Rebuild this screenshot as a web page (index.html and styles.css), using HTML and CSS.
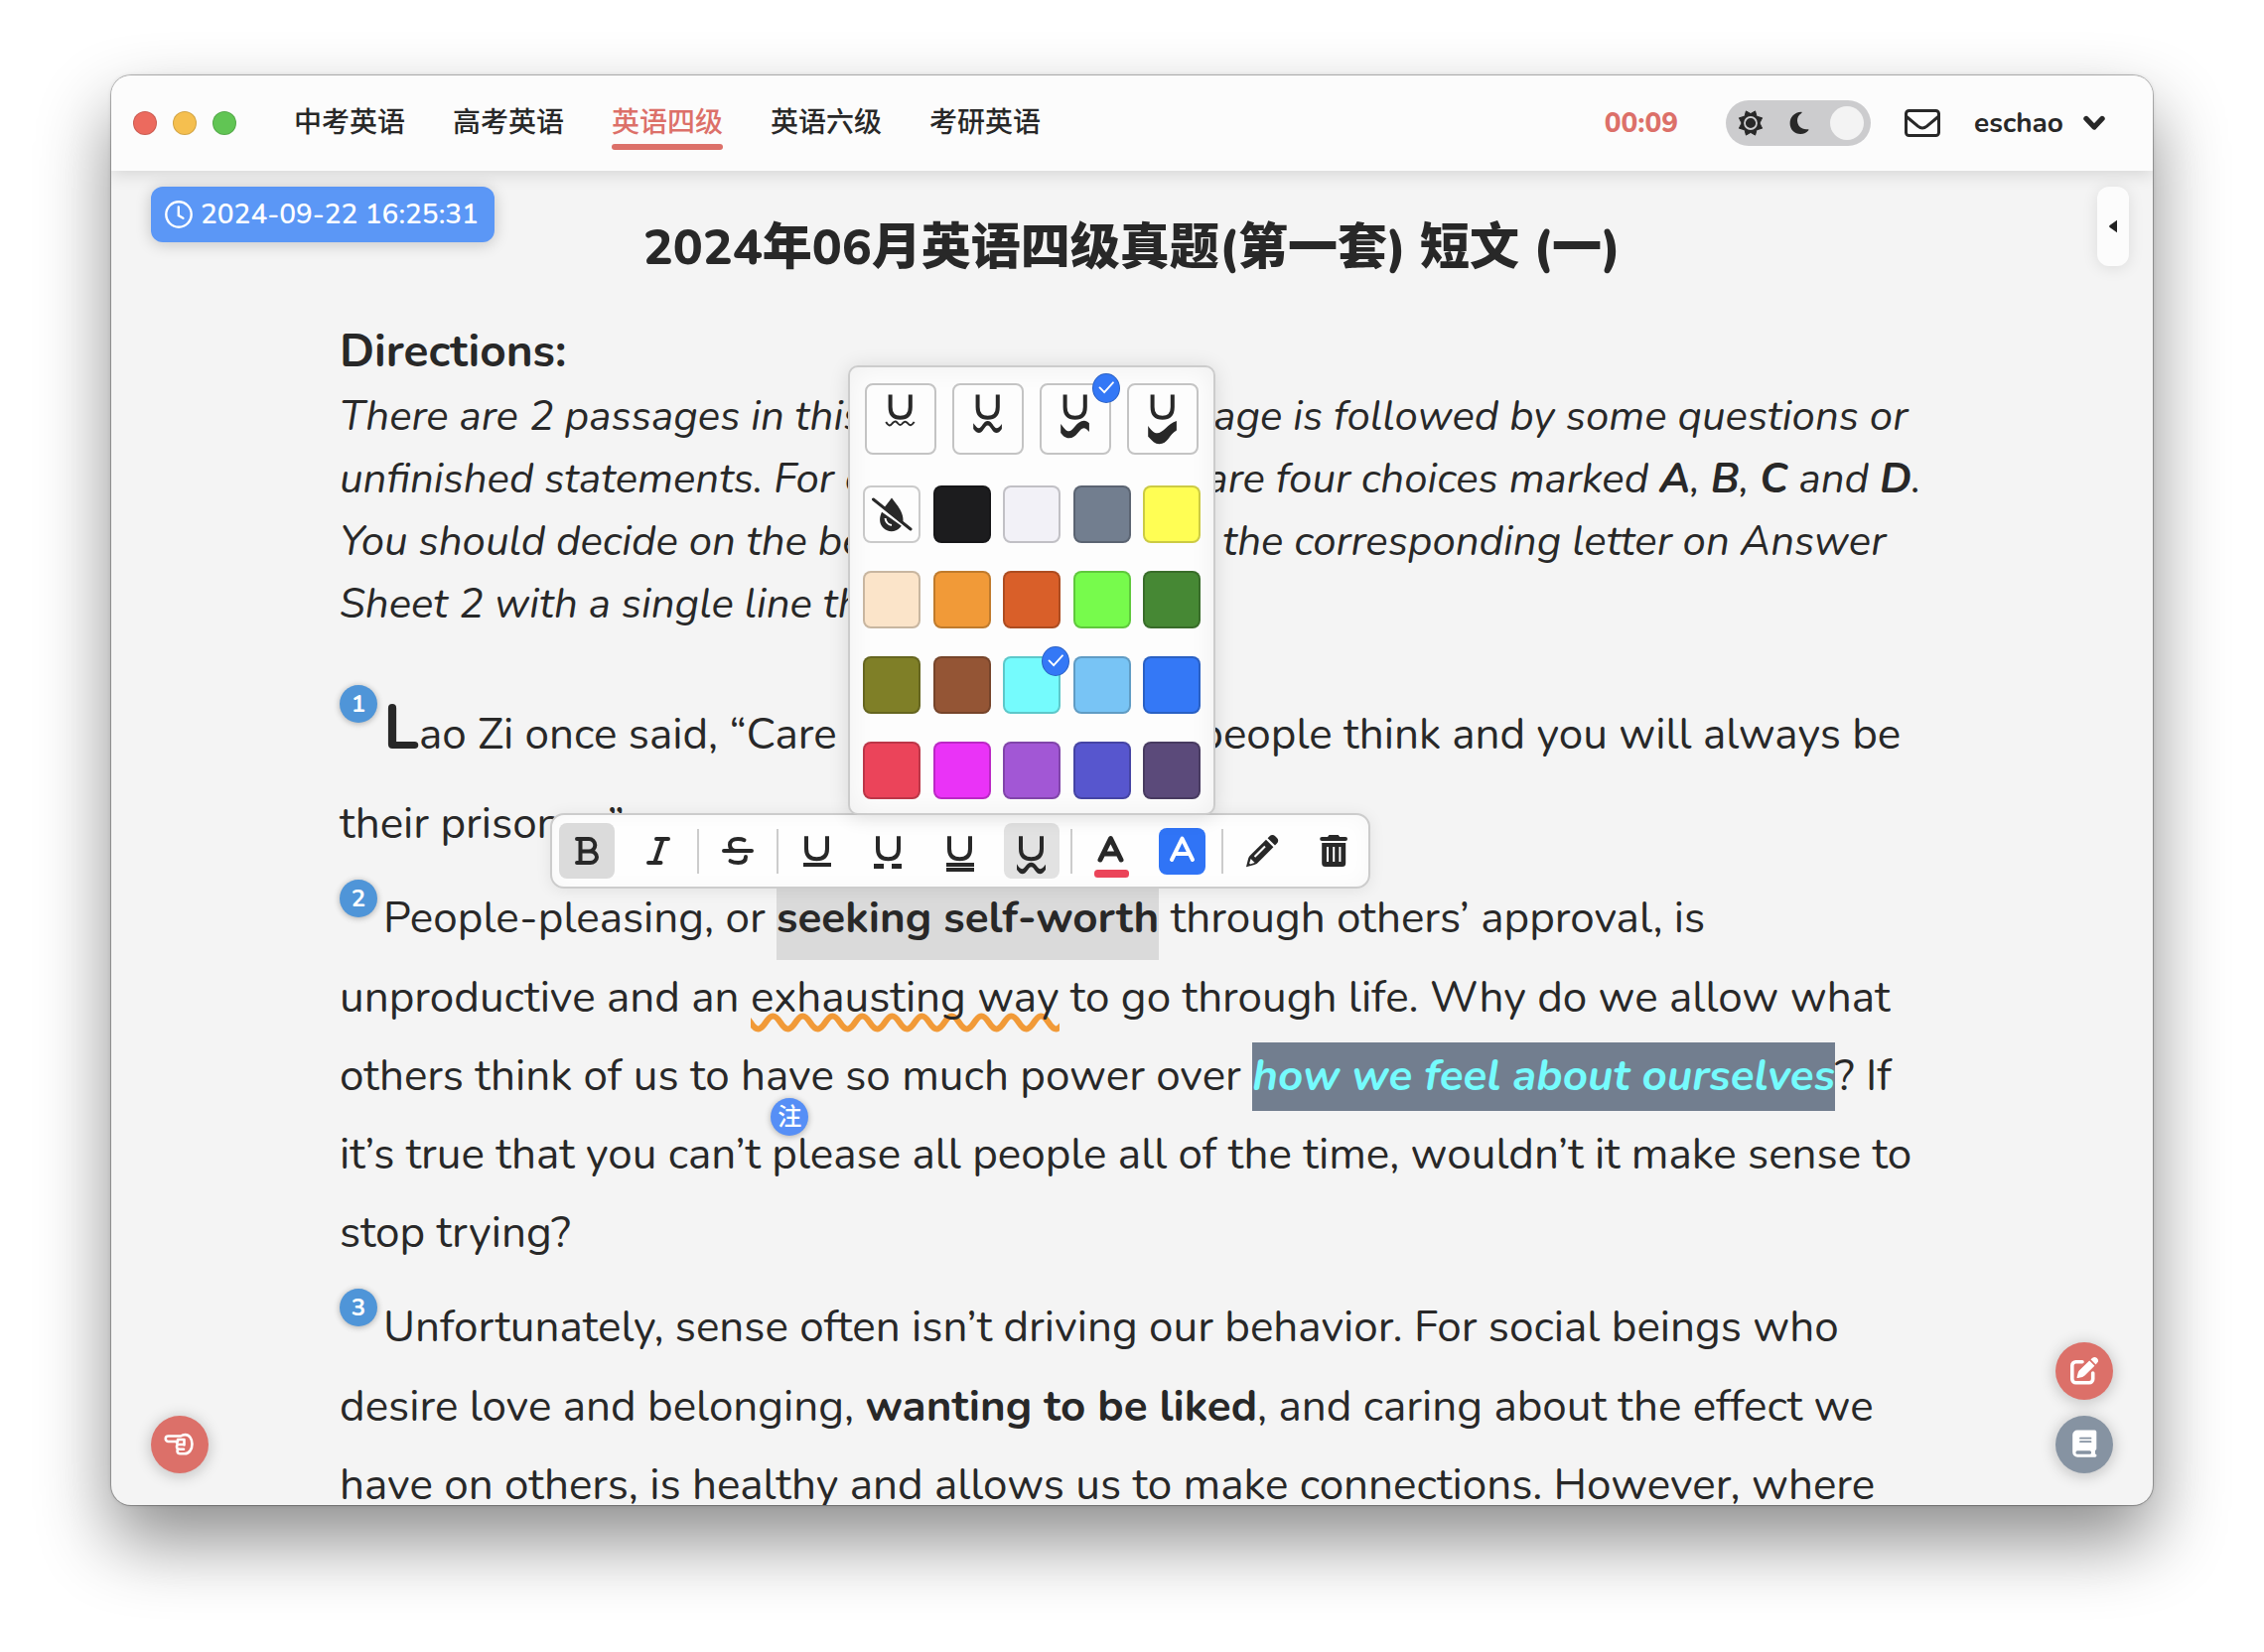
FILE: index.html
```html
<!DOCTYPE html>
<html lang="zh-CN">
<head>
<meta charset="utf-8">
<meta name="viewport" content="width=device-width, initial-scale=1">
<title>2024年06月英语四级真题(第一套) 短文 (一)</title>
<link rel="stylesheet" href="styles.css">
</head>
<body>
<div class="window">
  <header class="header">
    <div class="lights">
      <button class="light light-close" type="button" aria-label="Close"></button>
      <button class="light light-min" type="button" aria-label="Minimize"></button>
      <button class="light light-max" type="button" aria-label="Maximize"></button>
    </div>
    <nav class="nav">
      <a class="nav-link" href="#zk">中考英语</a>
      <a class="nav-link" href="#gk">高考英语</a>
      <a class="nav-link active" href="#cet4">英语四级</a>
      <a class="nav-link" href="#cet6">英语六级</a>
      <a class="nav-link" href="#ky">考研英语</a>
    </nav>
    <span class="timer">00:09</span>
    <label class="theme">
      <input class="theme-input" type="checkbox" role="switch" aria-label="Theme">
      <svg class="theme-sun" viewBox="0 0 26 26"><path d="M13 3.6 17.6 0.9 19 6.2 24.6 7.8 22 13 24.6 18.2 19 19.8 17.6 25.1 13 22.4 8.4 25.1 7 19.8 1.4 18.2 4 13 1.4 7.8 7 6.2 8.400 .9z" fill="#282828" stroke="#282828" stroke-width="1" stroke-linejoin="round"/><circle cx="13" cy="13" r="6" fill="#282828" stroke="#ccccce" stroke-width="1.8"/></svg>
      <svg class="theme-moon" viewBox="0 0 20 24"><path d="M12 .8C5 1.200.6 6 .6 12.200c0 6.300 4.800 10.800 10.600 10.800 3.600 0 6.400-1.500 8.100-3.800.4-.6 0-1.100-.6-1-6 .9-10.700-3.200-10.700-8.900 0-3 1.300-5.400 4.300-7.400.6-.4.4-1.100-.3-1.100z" fill="#282828"/></svg>
      <span class="theme-knob"></span>
    </label>
    <button class="mail" type="button" aria-label="Messages">
      <svg width="36" height="28" viewBox="0 0 36 28" fill="none" stroke="#282828" stroke-width="3" stroke-linejoin="round"><rect x="1.500" y="1.500" width="33" height="25" rx="3"/><path d="M2 7.500 13.500 17.200c3 2.400 6 2.400 9 0L34 7.500"/></svg>
    </button>
    <button class="user" type="button">eschao
      <svg width="22" height="16" viewBox="0 0 22 16"><path d="M3 3.500 11 12l8-8.500" fill="none" stroke="#282828" stroke-width="5.400" stroke-linecap="round" stroke-linejoin="round"/></svg>
    </button>
  </header>

  <main class="reader">
    <div class="clock">
      <svg width="28" height="28" viewBox="0 0 28 28" fill="none" stroke="#fff" stroke-width="2.400" stroke-linecap="round"><circle cx="14" cy="14" r="12.700"/><path d="M13.800 6.500V15l4.600 2.800"/></svg>
      <time datetime="2024-09-22T16:25:31">2024-09-22 16:25:31</time>
    </div>
    <button class="drawer" type="button" aria-label="Open panel">
      <svg width="8" height="14" viewBox="0 0 8 14"><path d="M8 .8v12.400L.6 7.900a1.300 1.300 0 0 1 0-1.800z" fill="#222"/></svg>
    </button>

    <article class="article">
      <h1 class="title">2024年06月英语四级真题(第一套) 短文 (一)</h1>
      <h2 class="subtitle" lang="en">Directions:</h2>
      <p class="directions" lang="en">There are 2 passages in this section. Each passage is followed by some questions or unfinished statements. For each of them there are four choices marked <b>A</b>, <b>B</b>, <b>C</b> and <b>D</b>. You should decide on the best choice and mark the corresponding letter on Answer Sheet 2 with a single line through the centre.</p>

      <div class="passage" lang="en">
        <p class="para"><span class="num num-first">1</span><b class="dropcap">L</b>ao Zi once said, “Care about what other people think and you will always be their prisoner.”</p>
        <p class="para"><span class="num">2</span>People-pleasing, or <b class="selected">seeking self-worth</b> through others’ approval, is unproductive and an <span class="wavy">exhausting way</span> to go through life. Why do we allow what others think of us to have so much power over <span class="marked">how we feel about ourselves</span>? If it’s true that you can’t <span class="noted">please<button class="note" type="button" lang="zh-CN">注</button></span> all people all of the time, wouldn’t it make sense to stop trying?</p>
        <p class="para"><span class="num">3</span>Unfortunately, sense often isn’t driving our behavior. For social beings who desire love and belonging, <b>wanting to be liked</b>, and caring about the effect we have on others, is healthy and allows us to make connections. However, where</p>
      </div>

      <div class="toolbar" role="toolbar" aria-label="Format">
        <div class="group">
          <button class="tool on" type="button" aria-label="Bold"><svg viewBox="0 0 56 56"><path class="s4" d="M18 16H30a6.300 6.300 0 0 1 0 12.600H21.500M30 28.600H31.500a6.500 5.700 0 0 1 0 11.400H18M21.500 16V40"/></svg></button>
          <button class="tool" type="button" aria-label="Italic"><svg viewBox="0 0 56 56"><path class="s4" d="M26 16H38M18 40H30.500M32.500 16 24.300 40"/></svg></button>
        </div>
        <span class="sep"></span>
        <button class="tool" type="button" aria-label="Strikethrough"><svg viewBox="0 0 56 56"><path class="s4" d="M14 28H42M34.500 17.200C32.500 16.200 30 16 28 16c-5 0-8 2.500-8 6 0 3 2 5 5 6M20.500 38.200C23 39.600 25.500 40 28.500 40c4.500 0 7.500-2 7.500-6"/></svg></button>
        <span class="sep"></span>
        <div class="group">
          <button class="tool" type="button" aria-label="Underline"><svg viewBox="0 0 56 56"><path class="u" d="M17 13.300V26C17 33 21 36.300 27.500 36.300S38 33 38 26V13.300"/><path d="M14 40h28v4H14z"/></svg></button>
          <button class="tool" type="button" aria-label="Dashed underline"><svg viewBox="0 0 56 56"><path class="u" d="M17 13.300V26C17 33 21 36.300 27.500 36.300S38 33 38 26V13.300"/><path d="M13 41h10v5H13zM31 41h10v5H31z"/></svg></button>
          <button class="tool" type="button" aria-label="Double underline"><svg viewBox="0 0 56 56"><path class="u" d="M17 13.300V26C17 33 21 36.300 27.500 36.300S38 33 38 26V13.300"/><path d="M14 40h28v4H14zM14 45h28v4H14z"/></svg></button>
          <div class="anchor">
            <button class="tool on-light" type="button" aria-label="Wavy underline" aria-expanded="true"><svg viewBox="0 0 56 56"><path class="u" d="M17 13.300V26C17 33 21 36.300 27.500 36.300S38 33 38 26V13.300"/><path d="M13 41.300c2 3.300 3.600 4.900 5.200 4.900 3 0 4.500-6.400 9.300-6.400s6.300 6.400 9.300 6.400c1.600 0 3.200-1.600 5.200-4.400V47c-2 2.800-3.700 4.200-5.500 4.200-4.800 0-6-7-9-7s-4.200 7-9 7c-1.800 0-3.500-1.400-5.500-4.200z"/></svg></button>
            <div class="popup">
              <div class="styles">
                <button class="style" type="button" aria-label="Thin wave"><svg viewBox="0 0 72 72"><path class="u" d="M25.600 11.500V24C25.600 31.500 29 34.800 35.700 34.800S45.800 31.500 45.800 24V11.500"/><path class="s2" d="M21.200 39c3 4.500 4 4.500 7 .8 2.200-2 3.200-1.400 4.600.2 2 2.600 3.500 2.600 5.500 0 1.600-1.800 2.900-1.800 4.500 0 2.500 3.200 4 3 6.900-1"/></svg></button>
                <button class="style" type="button" aria-label="Medium wave"><svg viewBox="0 0 72 72"><path class="u" d="M25.600 11.500V24C25.600 31.500 29 34.800 35.700 34.800S45.800 31.500 45.800 24V11.500"/><path d="M21.200 40.200c2.500 3 4 5 5.500 5 3 0 4.500-7.200 9-7.200s6 7.200 9 7.200c1.500 0 3-1.200 5.200-4.200V46c-2.200 3-3.700 4-5.200 4-4.500 0-6-7.600-9-7.600s-4.500 7.600-9 7.600c-1.500 0-3-1-5.500-4z"/></svg></button>
                <button class="style" type="button" aria-label="Thick wave"><svg viewBox="0 0 72 72"><path class="u" d="M25.600 11.500V24C25.600 31.500 29 34.800 35.700 34.800S45.800 31.500 45.800 24V11.500"/><path d="M21.200 41c3.500 4.500 5.500 7.300 8 7.300 5 0 8-10.600 15.500-10.600 2 0 3.700 1 5.200 2.600V49c-2-2.300-3.500-3.800-5.500-3.800C40 45.200 37.500 55.300 29.500 55.300c-4 0-6-2.500-8.300-5.300z"/></svg><span class="check"><svg viewBox="0 0 28 28"><path d="m7 14.500 5 5 9.500-10.500"/></svg></span></button>
                <button class="style" type="button" aria-label="Heavy wave"><svg viewBox="0 0 72 72"><path class="u" d="M25.600 11.500V24C25.600 31.500 29 34.800 35.700 34.800S45.800 31.500 45.800 24V11.500"/><path d="M21.200 43c4 5.500 6.500 7.300 9 7.300 6 0 11-9.500 19.700-12.300V47.500C42.500 51.500 41 61.300 32.500 61.300c-4.500 0-7-3-11.300-7.500z"/></svg></button>
              </div>
              <div class="swatches">
                <button class="swatch none" type="button" aria-label="No colour"><svg viewBox="0 0 58 58"><path d="M29 12.500c5 6.500 11.500 14 11.500 22a11.700 11.700 0 0 1-23.400 0c0-8 7-15.500 11.900-22z"/><path d="M22.500 33c.5 4 3 6.500 6.500 7" fill="none" stroke="#fdfdfd" stroke-width="2"/><path d="m8 16.500 42 29.500" fill="none" stroke="#fdfdfd" stroke-width="4"/><path d="m10.500 14 37.500 30" fill="none" stroke="#282828" stroke-width="3" stroke-linecap="round"/></svg></button>
                <button class="swatch c-black" type="button" aria-label="Black"></button>
                <button class="swatch c-white" type="button" aria-label="White"></button>
                <button class="swatch c-gray" type="button" aria-label="Gray"></button>
                <button class="swatch c-yellow" type="button" aria-label="Yellow"></button>
                <button class="swatch c-cream" type="button" aria-label="Cream"></button>
                <button class="swatch c-orange" type="button" aria-label="Orange"></button>
                <button class="swatch c-rust" type="button" aria-label="Rust"></button>
                <button class="swatch c-lime" type="button" aria-label="Lime"></button>
                <button class="swatch c-green" type="button" aria-label="Green"></button>
                <button class="swatch c-olive" type="button" aria-label="Olive"></button>
                <button class="swatch c-brown" type="button" aria-label="Brown"></button>
                <button class="swatch c-cyan" type="button" aria-label="Cyan"><span class="check"><svg viewBox="0 0 28 28"><path d="m7 14.500 5 5 9.500-10.500"/></svg></span></button>
                <button class="swatch c-sky" type="button" aria-label="Sky"></button>
                <button class="swatch c-blue" type="button" aria-label="Blue"></button>
                <button class="swatch c-red" type="button" aria-label="Red"></button>
                <button class="swatch c-magenta" type="button" aria-label="Magenta"></button>
                <button class="swatch c-purple" type="button" aria-label="Purple"></button>
                <button class="swatch c-indigo" type="button" aria-label="Indigo"></button>
                <button class="swatch c-plum" type="button" aria-label="Plum"></button>
              </div>
            </div>
          </div>
        </div>
        <span class="sep"></span>
        <div class="group">
          <button class="tool" type="button" aria-label="Text colour"><svg viewBox="0 0 56 56"><path class="a" d="M17 37 27.500 15.600 38 37M20.500 31H34.500"/><rect x="11" y="47" width="35" height="8" rx="3.500" fill="#eb4459"/></svg></button>
          <button class="tool" type="button" aria-label="Highlight colour"><svg viewBox="0 0 56 56"><rect x="4" y="5" width="47" height="47" rx="8" fill="#3074f6"/><path class="a white" d="M17 37 27.500 15.600 38 37M20.500 31H34.500"/></svg></button>
        </div>
        <span class="sep"></span>
        <div class="group">
          <button class="tool" type="button" aria-label="Edit"><svg viewBox="0 0 56 56"><path d="m33.600 15.200 2-2c1.600-1.600 4-1.600 5.600 0l1.800 1.800c1.600 1.600 1.600 4 0 5.600l-2 2zM32 16.800l7.400 7.400-15.700 15.900c-1 1-2 1.500-3.400 1.900L12 44.200l2.100-8.400c.4-1.400 1-2.500 2-3.400z"/><path d="M20.500 34 31 23.500" fill="none" stroke="#fdfdfd" stroke-width="2"/><path d="m16.600 36 4 4-4.600 1.400-.8-.8z" fill="#fdfdfd"/></svg></button>
          <button class="tool" type="button" aria-label="Delete"><svg viewBox="0 0 56 56"><path d="M23.500 12h9.200l1.500 2H40a2 2 0 0 1 0 4H16.200a2 2 0 0 1 0-4H22z"/><path d="M16.200 20h24v20.500a3.500 3.500 0 0 1-3.500 3.500h-17a3.500 3.500 0 0 1-3.500-3.500z"/><path d="M22 24v15M28.200 24v15M34.400 24v15" stroke="#fdfdfd" stroke-width="2"/></svg></button>
        </div>
      </div>
    </article>
  </main>

  <button class="round round-left" type="button" aria-label="Previous">
    <svg viewBox="0 0 58 58" fill="none" stroke="#fff" stroke-width="2.600" stroke-linejoin="round" stroke-linecap="round"><path d="M30 20.500H17.500a2.500 2.500 0 0 0 0 5.500H27M30 20.500c1.500-1 3-1.400 4.500-1.400 4 0 7 4 7 9.400s-3 9.700-7.500 9.700h-4.500c-3.600 0-3.600-3.800-1.500-4.400-2.600-.8-2.800-4.600 0-4.800-2.500-.6-2.500-2.900-1-3.300M28 29h4.500M28.500 33.800H33M27 26v-2h6.500v5.500"/></svg>
  </button>
  <div class="dock">
    <button class="round round-edit" type="button" aria-label="Write">
      <svg viewBox="0 0 58 58"><path d="M27 19.800H20.500a3.700 3.700 0 0 0-3.700 3.700V37a3.700 3.700 0 0 0 3.700 3.700H34a3.700 3.700 0 0 0 3.700-3.700V31" fill="none" stroke="#fff" stroke-width="3.600" stroke-linecap="round"/><path d="m35.500 17.300 1.800-1.600c1.200-1 3-1 4.200 0l.7.700c1.200 1.200 1.200 3 0 4.200l-1.600 1.800zM34.200 18.600l5.200 5.200L29.500 33.600c-.7.700-1.400 1.100-2.300 1.300l-4.700 1.200c-.6.100-1-.3-.9-.9l1.200-4.700c.3-.9.700-1.600 1.300-2.300z" fill="#fff"/></svg>
    </button>
    <button class="round round-book" type="button" aria-label="Dictionary">
      <svg viewBox="0 0 58 58"><path d="M22 14.500H39.500a1.800 1.800 0 0 1 1.800 1.800V33.200a1.800 1.800 0 0 1-1.300 1.700V38.600a1.600 1.600 0 0 1-.3 3.200H22.200a5 5 0 0 1-5-5V19.300a4.800 4.800 0 0 1 4.800-4.800z" fill="#fff"/><path d="M25 22.700H35.500M25 26.200H35.500" stroke="#8693a2" stroke-width="1.800" stroke-linecap="round"/><rect x="20.500" y="35.200" width="15.500" height="3.600" rx="1.500" fill="#8693a2"/></svg>
    </button>
  </div>
</div>
</body>
</html>
```
FILE: styles.css
```css
* {
  box-sizing: border-box;
}

body {
  margin: 0;
  background: #fff;
  color: #282828;
  font-family: Nunito, "Noto Sans CJK SC", sans-serif;
}

button {
  padding: 0;
  border: 0;
  background: none;
  color: inherit;
  font: inherit;
  cursor: pointer;
}

svg {
  display: block;
}

/* window frame */
.window {
  position: relative;
  display: flex;
  flex-direction: column;
  height: calc(100vh - 224px);
  margin: 76px 112px 148px;
  overflow: hidden;
  border-radius: 20px;
  background: #f4f4f4;
  box-shadow: 0 0 0 1px rgba(0, 0, 0, .24), 0 0 4px rgba(0, 0, 0, .15), 0 36px 72px rgba(0, 0, 0, .45);
}

/* header */
.header {
  position: relative;
  z-index: 2;
  display: flex;
  flex: none;
  align-items: center;
  height: 96px;
  padding: 0 48px 0 22px;
  background: #fcfcfc;
  box-shadow: 0 4px 16px rgba(0, 0, 0, .12);
  font-size: 28px;
}

.lights {
  display: flex;
  gap: 16px;
}

.light {
  width: 24px;
  height: 24px;
  border: 1px solid rgba(0, 0, 0, .14);
  border-radius: 50%;
}

.light-close { background: #ec6a5e; }
.light-min { background: #f5bf4f; }
.light-max { background: #61c554; }

.nav {
  display: flex;
  gap: 48px;
  margin: 0 auto 0 58px;
}

.nav-link {
  position: relative;
  color: inherit;
  font-weight: 500;
  line-height: 42px;
  text-decoration: none;
}

.nav-link.active {
  color: #dc7069;
}

.nav-link.active::after {
  position: absolute;
  right: 0;
  bottom: -6px;
  left: 0;
  height: 6px;
  border-radius: 3px;
  background: #dc7069;
  content: "";
}

.timer {
  margin-right: 48px;
  color: #dc7069;
  font-weight: 800;
}

.theme {
  display: flex;
  align-items: center;
  width: 146px;
  height: 46px;
  margin-right: 34px;
  padding: 0 7px 0 12px;
  border-radius: 23px;
  background: #ccccce;
  cursor: pointer;
}

.theme-input {
  position: absolute;
  width: 1px;
  height: 1px;
  margin: 0;
  opacity: 0;
}

.theme-sun {
  width: 26px;
  height: 26px;
}

.theme-moon {
  width: 20px;
  height: 24px;
  margin-left: 26px;
}

.theme-knob {
  width: 34px;
  height: 34px;
  margin-left: auto;
  border-radius: 50%;
  background: #f3f3f3;
}

.mail {
  margin-right: 34px;
}

.user {
  display: flex;
  align-items: center;
  gap: 20px;
  font-weight: 700;
}

/* reading area */
.reader {
  position: relative;
  flex: 1;
  min-height: 0;
  padding: 40px 230px 0;
}

.clock {
  position: absolute;
  top: 16px;
  left: 40px;
  display: flex;
  gap: 8px;
  align-items: center;
  height: 56px;
  padding: 0 16px 0 14px;
  border-radius: 12px;
  background: #5b97f6;
  box-shadow: 0 2px 16px rgba(0, 0, 0, .2);
  color: #fff;
  font-size: 28px;
  font-weight: 600;
}

.drawer {
  position: absolute;
  top: 16px;
  right: 24px;
  display: flex;
  align-items: center;
  justify-content: center;
  width: 32px;
  height: 80px;
  border-radius: 12px;
  background: #fcfcfc;
  box-shadow: 0 2px 16px rgba(0, 0, 0, .1);
}

.article {
  position: relative;
}

.title {
  margin: 0 0 32px;
  font-size: 50px;
  font-weight: 800;
  line-height: 75px;
  text-align: center;
}

.subtitle {
  margin: 0;
  font-size: 46px;
  font-weight: 700;
  line-height: 69px;
}

.directions {
  margin: 0 0 36px;
  font-size: 42px;
  font-style: italic;
  line-height: 63px;
}

.passage {
  display: flex;
  flex-direction: column;
  gap: 16px;
  font-size: 44px;
  line-height: 1.8;
}

.para {
  margin: 0;
}

.dropcap {
  font-size: 64px;
  font-weight: 700;
}

.num {
  display: inline-block;
  width: 38px;
  height: 38px;
  margin-right: 6px;
  border-radius: 50%;
  background: #4f95d8;
  box-shadow: 0 1px 6px rgba(0, 0, 0, .3);
  color: #fff;
  font-size: 24px;
  font-weight: 700;
  line-height: 38px;
  text-align: center;
  vertical-align: 26px;
}

.num-first {
  vertical-align: 37px;
}

.selected {
  padding: 4px 0 12px;
  background: #dadada;
}

.wavy {
  padding-bottom: 5px;
  background: url("data:image/svg+xml,%3Csvg xmlns='http://www.w3.org/2000/svg' width='30' height='20' viewBox='0 0 30 20'%3E%3Cpath d='M-22.500 3.500C-16 3.500-14 16.500-7.500 16.500S1 3.500 7.500 3.500 16 16.500 22.500 16.500 31 3.500 37.500 3.500' fill='none' stroke='%23f19a38' stroke-width='6'/%3E%3C/svg%3E") -15px 100% repeat-x;
}

.marked {
  padding: 4px 0 5px;
  background: #727e8f;
  color: #75fbfd;
  font-style: italic;
  font-weight: 700;
}

.noted {
  position: relative;
}

.note {
  position: absolute;
  top: -27px;
  left: -1px;
  width: 38px;
  height: 38px;
  border-radius: 50%;
  background: #568ff6;
  box-shadow: 0 1px 6px rgba(0, 0, 0, .3);
  color: #fff;
  font-size: 24px;
  font-weight: 500;
  line-height: 38px;
}

/* floating format bar */
.toolbar {
  position: absolute;
  top: 607px;
  left: 212px;
  display: flex;
  gap: 11px;
  align-items: center;
  height: 76px;
  padding: 0 7px;
  border: 2px solid #ccc;
  border-radius: 14px;
  background: #fefefe;
  box-shadow: 0 2px 16px rgba(0, 0, 0, .08), inset 0 0 20px rgba(0, 0, 0, .03);
}

.group {
  display: flex;
  gap: 16px;
}

.sep {
  width: 2px;
  height: 45px;
  background: #ccc;
}

.tool {
  width: 56px;
  height: 56px;
  border-radius: 8px;
}

.tool svg,
.style svg {
  fill: #282828;
}

.on { background: #dbdbdb; }
.on-light { background: #e2e2e2; }

.s4,
.s2,
.u,
.a {
  fill: none;
  stroke: #282828;
  stroke-width: 4;
}

.s4,
.a {
  stroke-linecap: round;
  stroke-linejoin: round;
}

.s2 { stroke-width: 2; }
.a { stroke-width: 5; }

.white {
  stroke: #fff;
  stroke-width: 4;
}

.anchor {
  position: relative;
  display: flex;
}

.popup {
  position: absolute;
  bottom: calc(100% + 8px);
  left: 50%;
  width: 370px;
  padding: 16px 13px 14px;
  border: 2px solid #ccc;
  border-radius: 10px;
  background: #fdfdfd;
  box-shadow: 0 2px 20px rgba(0, 0, 0, .12), inset 0 0 28px rgba(0, 0, 0, .06);
  transform: translateX(-50%);
}

.styles {
  display: flex;
  justify-content: space-between;
  margin: 0 2px 31px;
}

.style {
  position: relative;
  width: 72px;
  height: 72px;
  border: 2px solid #c4c4c4;
  border-radius: 8px;
  background: #fdfdfd;
}

.style > svg {
  margin: -2px;
  width: 72px;
}

.swatches {
  display: grid;
  grid-template-columns: repeat(5, 58px);
  justify-content: space-between;
  row-gap: 28px;
}

.swatch {
  position: relative;
  height: 58px;
  border: 2px solid rgba(0, 0, 0, .2);
  border-radius: 8px;
}

.none > svg {
  width: 58px;
  margin: -2px;
  fill: #282828;
}

.check {
  position: absolute;
  top: -12px;
  right: -11px;
  width: 28px;
  height: 30px;
  border: 1px solid rgba(0, 0, 0, .2);
  border-radius: 50%;
  background: #3478f6;
}

.check path {
  fill: none;
  stroke: #fff;
  stroke-width: 2;
  stroke-linecap: round;
}

.c-black { background: #1c1c1e; }
.c-white { background: #f2f1f7; }
.c-gray { background: #727e8f; }
.c-yellow { background: #fffe54; }
.c-cream { background: #fbe4c9; }
.c-orange { background: #f19a38; }
.c-rust { background: #d95f29; }
.c-lime { background: #77fb4c; }
.c-green { background: #468834; }
.c-olive { background: #7f7f27; }
.c-brown { background: #945535; }
.c-cyan { background: #75fbfd; }
.c-sky { background: #78c4f5; }
.c-blue { background: #3478f6; }
.c-red { background: #eb445a; }
.c-magenta { background: #ea33f7; }
.c-purple { background: #a257d5; }
.c-indigo { background: #5756ce; }
.c-plum { background: #5b4a7a; }

/* corner actions */
.round {
  width: 58px;
  height: 58px;
  border-radius: 50%;
  background: #dc7069;
  box-shadow: 0 2px 16px rgba(0, 0, 0, .24);
}

.round-left {
  position: absolute;
  bottom: 32px;
  left: 40px;
}

.dock {
  position: absolute;
  right: 40px;
  bottom: 32px;
  display: flex;
  flex-direction: column;
  gap: 16px;
}

.round-book {
  background: #8693a2;
}
```
